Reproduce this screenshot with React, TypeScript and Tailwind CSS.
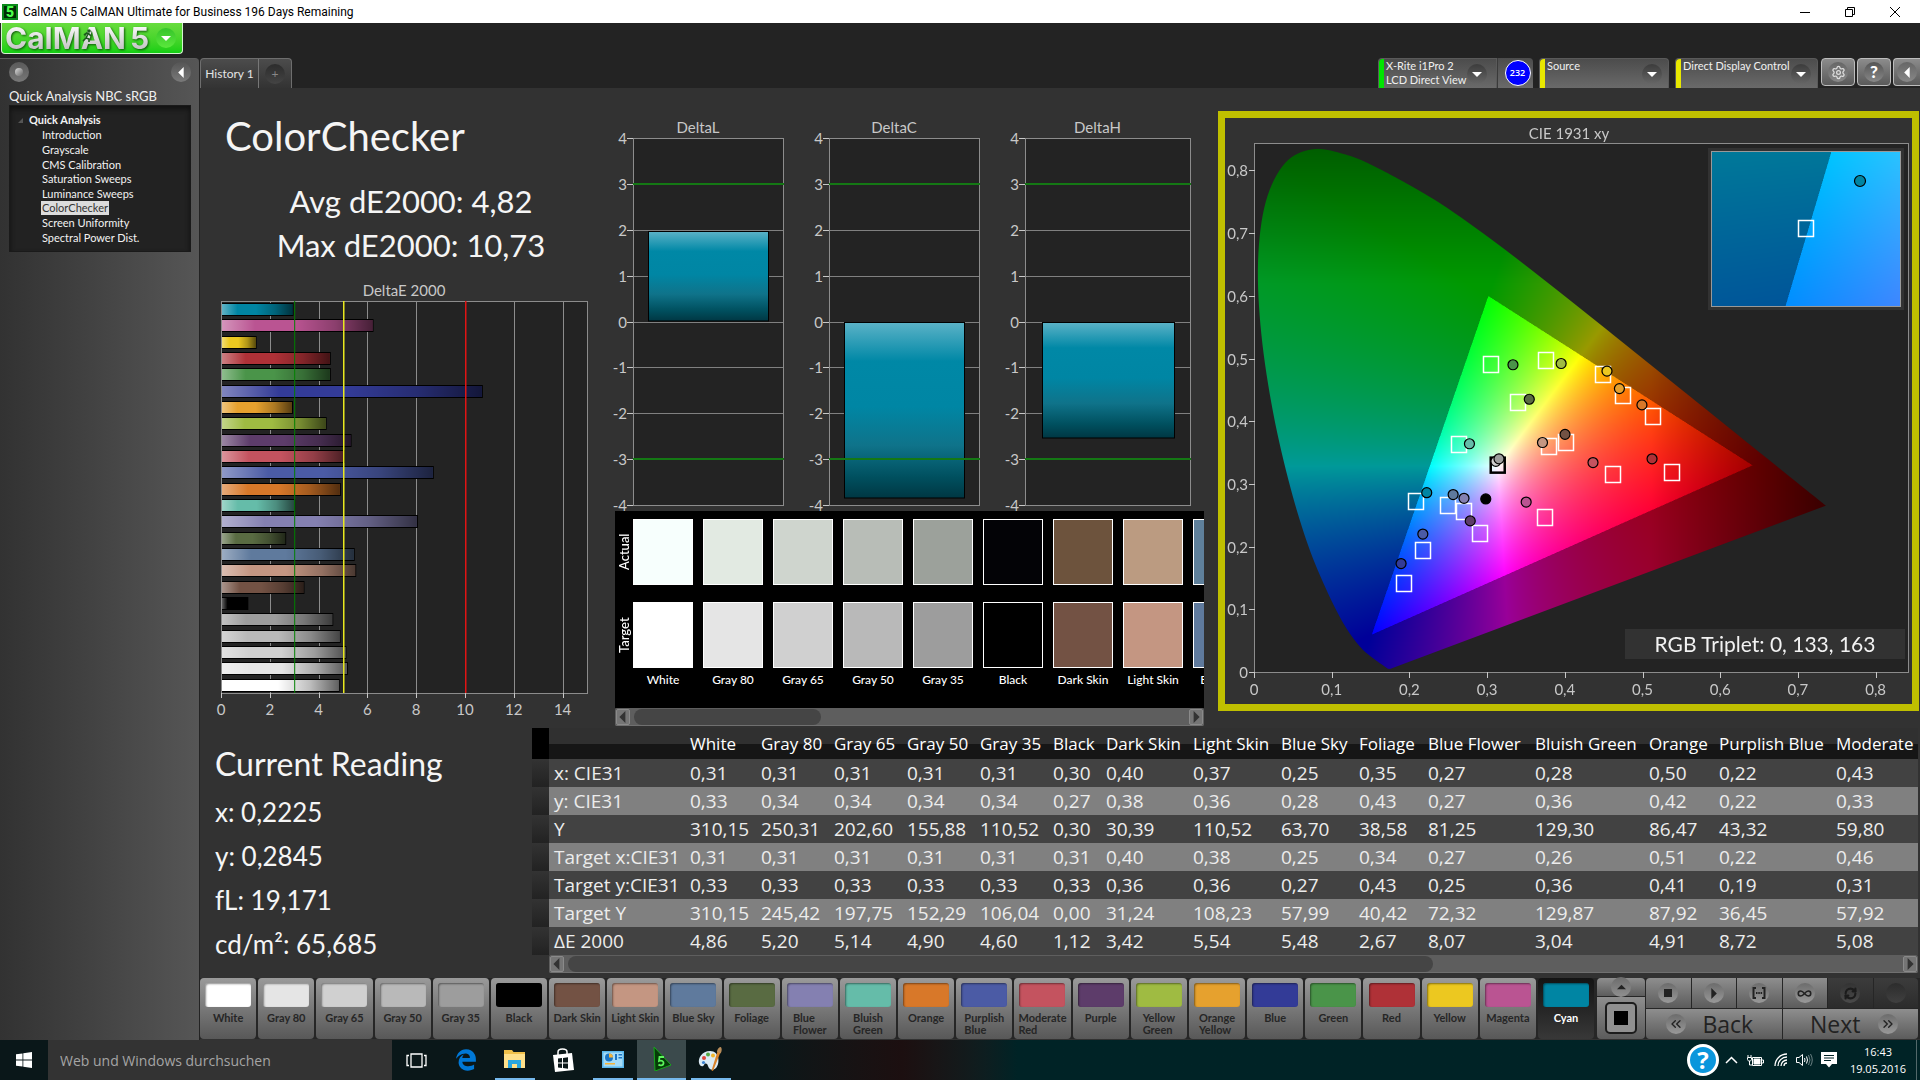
import { useEffect, useRef } from "react";
import type { ReactNode } from "react";
import { clsx } from "clsx";
import { FaEdgeLegacy } from "react-icons/fa";
import { ChevronsLeft, ChevronsRight, Infinity as InfinityIcon, RefreshCw, Settings } from "lucide-react";

type Patch = { name: string; color: string; actual: string; dE: number };

const PATCHES: Patch[] = [
  { name: "White", color: "#ffffff", actual: "#f7fffd", dE: 4.86 },
  { name: "Gray 80", color: "#e5e5e5", actual: "#e2eae2", dE: 5.2 },
  { name: "Gray 65", color: "#d0d0d0", actual: "#cfd5ce", dE: 5.14 },
  { name: "Gray 50", color: "#b9b9b9", actual: "#b8bdb7", dE: 4.9 },
  { name: "Gray 35", color: "#9d9d9d", actual: "#9ca19b", dE: 4.6 },
  { name: "Black", color: "#000000", actual: "#030306", dE: 1.12 },
  { name: "Dark Skin", color: "#735244", actual: "#6d533d", dE: 3.42 },
  { name: "Light Skin", color: "#c49682", actual: "#bb9b81", dE: 5.54 },
  { name: "Blue Sky", color: "#5f7a9d", actual: "#5f809b", dE: 5.48 },
  { name: "Foliage", color: "#596b42", actual: "#596b42", dE: 2.67 },
  { name: "Blue Flower", color: "#8480b1", actual: "#8480b1", dE: 8.07 },
  { name: "Bluish Green", color: "#65bca9", actual: "#65bca9", dE: 3.04 },
  { name: "Orange", color: "#d87829", actual: "#d87829", dE: 4.91 },
  { name: "Purplish Blue", color: "#4b5ba5", actual: "#4b5ba5", dE: 8.72 },
  { name: "Moderate Red", color: "#c4535f", actual: "#c4535f", dE: 5.08 },
  { name: "Purple", color: "#5d3c6a", actual: "#5d3c6a", dE: 5.35 },
  { name: "Yellow Green", color: "#9fbb42", actual: "#9fbb42", dE: 4.33 },
  { name: "Orange Yellow", color: "#e6a12e", actual: "#e6a12e", dE: 2.95 },
  { name: "Blue", color: "#333b97", actual: "#333b97", dE: 10.73 },
  { name: "Green", color: "#4a9449", actual: "#4a9449", dE: 4.5 },
  { name: "Red", color: "#af3137", actual: "#af3137", dE: 4.5 },
  { name: "Yellow", color: "#ecc820", actual: "#ecc820", dE: 1.46 },
  { name: "Magenta", color: "#ba5492", actual: "#ba5492", dE: 6.25 },
  { name: "Cyan", color: "#0085a3", actual: "#0085a3", dE: 2.97 },
];

const TREE = [
  "Introduction",
  "Grayscale",
  "CMS Calibration",
  "Saturation Sweeps",
  "Luminance Sweeps",
  "ColorChecker",
  "Screen Uniformity",
  "Spectral Power Dist.",
];

const COLUMNS = [
  { name: "White", width: 71 },
  { name: "Gray 80", width: 73 },
  { name: "Gray 65", width: 73 },
  { name: "Gray 50", width: 73 },
  { name: "Gray 35", width: 73 },
  { name: "Black", width: 53 },
  { name: "Dark Skin", width: 87 },
  { name: "Light Skin", width: 88 },
  { name: "Blue Sky", width: 78 },
  { name: "Foliage", width: 69 },
  { name: "Blue Flower", width: 107 },
  { name: "Bluish Green", width: 114 },
  { name: "Orange", width: 70 },
  { name: "Purplish Blue", width: 117 },
  { name: "Moderate", width: undefined },
];

const ROWS: [string, string[]][] = [
  ["x: CIE31", ["0,31", "0,31", "0,31", "0,31", "0,31", "0,30", "0,40", "0,37", "0,25", "0,35", "0,27", "0,28", "0,50", "0,22", "0,43"]],
  ["y: CIE31", ["0,33", "0,34", "0,34", "0,34", "0,34", "0,27", "0,38", "0,36", "0,28", "0,43", "0,27", "0,36", "0,42", "0,22", "0,33"]],
  ["Y", ["310,15", "250,31", "202,60", "155,88", "110,52", "0,30", "30,39", "110,52", "63,70", "38,58", "81,25", "129,30", "86,47", "43,32", "59,80"]],
  ["Target x:CIE31", ["0,31", "0,31", "0,31", "0,31", "0,31", "0,31", "0,40", "0,38", "0,25", "0,34", "0,27", "0,26", "0,51", "0,22", "0,46"]],
  ["Target y:CIE31", ["0,33", "0,33", "0,33", "0,33", "0,33", "0,33", "0,36", "0,36", "0,27", "0,43", "0,25", "0,36", "0,41", "0,19", "0,31"]],
  ["Target Y", ["310,15", "245,42", "197,75", "152,29", "106,04", "0,00", "31,24", "108,23", "57,99", "40,42", "72,32", "129,87", "87,92", "36,45", "57,92"]],
  ["ΔE 2000", ["4,86", "5,20", "5,14", "4,90", "4,60", "1,12", "3,42", "5,54", "5,48", "2,67", "8,07", "3,04", "4,91", "8,72", "5,08"]],
];

const range = (from: number, to: number) => Array.from({ length: to - from + 1 }, (_, i) => from + i);

/* ---------- charts ---------- */

function DeltaEChart() {
  const left = 21;
  const top = 30;
  const width = 366;
  const height = 392;
  const unit = width / 15;
  const step = height / PATCHES.length;
  const bars = [...PATCHES].reverse();

  return (
    <svg viewBox="0 0 390 450" className="mt-1 block w-full" fontSize="15" fill="#c8c8c8">
      <defs>
        <linearGradient id="glossX">
          <stop offset="0" stopColor="#fff" stopOpacity="0.38" />
          <stop offset="0.22" stopColor="#fff" stopOpacity="0" />
          <stop offset="0.48" stopColor="#000" stopOpacity="0" />
          <stop offset="0.75" stopColor="#000" stopOpacity="0.25" />
          <stop offset="1" stopColor="#000" stopOpacity="0.62" />
        </linearGradient>
      </defs>
      <text x="204" y="25" textAnchor="middle">DeltaE 2000</text>
      <rect x={left} y={top} width={width} height={height} fill="#232323" />
      {[2, 4, 6, 8, 12, 14].map((v) => (
        <rect key={v} x={Math.round(left + v * unit)} y={top} width="1" height={height} fill="#8c8c8c" />
      ))}
      {bars.map((p, i) => {
        const y = Math.round(top + i * step + 2);
        return (
          <g key={p.name}>
            <rect x={left} y={y} width={p.dE * unit} height="13" fill="#000" />
            <rect x={left + 1} y={y + 1} width={p.dE * unit - 2} height="11" fill={p.color} />
            <rect x={left + 1} y={y + 1} width={p.dE * unit - 2} height="11" fill="url(#glossX)" />
          </g>
        );
      })}
      <rect x={left + 0.5} y={top + 0.5} width={width} height={height} fill="none" stroke="#8c8c8c" />
      <rect x={left + 3 * unit} y={top} width="1" height={height} fill="#008000" />
      <rect x={left + 5 * unit} y={top} width="1.5" height={height} fill="#e8e81e" />
      <rect x={left + 10 * unit} y={top} width="1.5" height={height} fill="#e01414" />
      {range(0, 7).map((i) => (
        <g key={i}>
          <rect x={Math.round(left + i * 2 * unit)} y={top + height} width="1" height="5" fill="#c8c8c8" />
          <text x={left + i * 2 * unit} y="444" textAnchor="middle">{i * 2}</text>
        </g>
      ))}
    </svg>
  );
}

function DeltaChart({ title, value, width }: { title: string; value: number; width: number }) {
  const left = 39;
  const top = 28;
  const unit = 367 / 8;
  const plot = width - left - 7;
  const zero = top + 4 * unit;
  const inset = plot * 0.1;
  const barTop = value > 0 ? zero - value * unit : zero;
  const barHeight = Math.abs(value) * unit;

  return (
    <svg width={width} height="401" viewBox={`0 0 ${width} 401`} className="block shrink-0 overflow-visible" fontSize="15" fill="#c8c8c8">
      <defs>
        <linearGradient id="cyanBar" x2="0" y2="1">
          <stop offset="0" stopColor="#5bb2c7" />
          <stop offset="0.22" stopColor="#0088a6" />
          <stop offset="0.48" stopColor="#0086a4" />
          <stop offset="0.7" stopColor="#0f738a" />
          <stop offset="0.88" stopColor="#00505f" />
          <stop offset="1" stopColor="#003743" />
        </linearGradient>
      </defs>
      <text x={left + plot / 2 - 10} y="23" textAnchor="middle">{title}</text>
      <rect x={left + 0.5} y={top} width={plot} height={8 * unit} fill="#232323" />
      {range(-4, 4).map((v) => (
        <g key={v}>
          <rect x={left - 6} y={Math.round(zero - v * unit)} width="6" height="1" fill="#c8c8c8" />
          <rect x={left} y={Math.round(zero - v * unit)} width={plot} height="1" fill="#808080" />
          <text x={left - 6} y={Math.round(zero - v * unit) + 6} textAnchor="end">{v}</text>
        </g>
      ))}
      <rect x={left + 0.5} y={top + 0.5} width={plot} height={8 * unit} fill="none" stroke="#8c8c8c" />
      <rect x={Math.round(left + inset) + 0.5} y={Math.round(barTop) + 0.5} width={Math.round(plot - 2 * inset)} height={Math.round(barHeight) - 0.5} fill="url(#cyanBar)" stroke="#000" />
      {[3, -3].map((v) => (
        <rect key={v} x={left} y={Math.round(zero - v * unit) - 1} width={plot + 1} height="2" fill="#147814" />
      ))}
    </svg>
  );
}

/* ---------- chromaticity diagram ---------- */

const LOCUS: [number, number][] = [
  [0.1741, 0.005], [0.1714, 0.0051], [0.1689, 0.0069], [0.1644, 0.0109], [0.1566, 0.0177], [0.144, 0.0297],
  [0.1355, 0.0399], [0.1241, 0.0578], [0.1096, 0.0868], [0.0913, 0.1327], [0.0687, 0.2007], [0.0454, 0.295],
  [0.0235, 0.4127], [0.0082, 0.5384], [0.0039, 0.6548], [0.0139, 0.7502], [0.0389, 0.812], [0.0743, 0.8338],
  [0.1142, 0.8262], [0.1547, 0.8059], [0.2296, 0.7543], [0.3016, 0.6923], [0.3731, 0.6245], [0.4441, 0.5547],
  [0.5125, 0.4866], [0.5752, 0.4242], [0.627, 0.3725], [0.6658, 0.334], [0.6915, 0.3083], [0.719, 0.2809],
  [0.7347, 0.2653],
];

const TARGETS: [number, number][] = [
  [0.304, 0.492], [0.375, 0.497], [0.448, 0.475], [0.339, 0.43], [0.474, 0.442], [0.512, 0.409], [0.263, 0.364],
  [0.378, 0.36], [0.4, 0.367], [0.461, 0.315], [0.537, 0.319], [0.207, 0.272], [0.249, 0.267], [0.269, 0.256],
  [0.29, 0.222], [0.373, 0.248], [0.216, 0.194], [0.192, 0.142],
];

const READINGS: [number, number, string][] = [
  [0.332, 0.49, "#4a9449"], [0.394, 0.492, "#9fbb42"], [0.453, 0.48, "#ecc820"], [0.353, 0.435, "#596b42"],
  [0.469, 0.452, "#e6a12e"], [0.498, 0.426, "#d87829"], [0.276, 0.364, "#65bca9"], [0.37, 0.366, "#c49682"],
  [0.399, 0.379, "#735244"], [0.435, 0.334, "#c4535f"], [0.511, 0.34, "#af3137"], [0.31, 0.336, "#d0d0d0"],
  [0.314, 0.34, "#9d9d9d"], [0.221, 0.286, "#0085a3"], [0.255, 0.283, "#5f7a9d"], [0.269, 0.277, "#8480b1"],
  [0.297, 0.276, "#000000"], [0.349, 0.271, "#ba5492"], [0.277, 0.241, "#5d3c6a"], [0.216, 0.22, "#4b5ba5"],
  [0.188, 0.173, "#333b97"],
];

const CIE = { width: 687, height: 586, x0: 30, y0: 554, sx: 777, sy: 627 };
const ZOOM = { x: 486, y: 33, width: 190, height: 156 };
const cx = (x: number) => CIE.x0 + x * CIE.sx;
const cy = (y: number) => CIE.y0 - y * CIE.sy;
const clamp = (v: number, lo: number, hi: number) => Math.min(hi, Math.max(lo, v));

// colour of a chromaticity in linear sRGB at full brightness, dimmed outside of the sRGB triangle
function shade(x: number, y: number) {
  const X = x / Math.max(y, 0.001);
  const Z = (1 - x - y) / Math.max(y, 0.001);
  const rgb = [
    3.2406 * X - 1.5372 - 0.4986 * Z,
    -0.9689 * X + 1.8758 + 0.0415 * Z,
    0.0557 * X - 0.204 + 1.057 * Z,
  ];
  const inside = Math.min(...rgb) >= 0;
  const max = Math.max(...rgb);
  const fall = clamp(1 - (x - 0.51) * 2.8, 0.4, 1) * clamp(1 - (y - 0.62) * 1.8, 0.6, 1);
  const gain = 255 * fall * (inside ? 1 : 0.6);
  return rgb.map((c) => gain * clamp(c / max, 0, 1) ** 0.95);
}

function paint(width: number, height: number, toXy: (px: number, py: number) => [number, number]) {
  const buffer = document.createElement("canvas");
  buffer.width = width;
  buffer.height = height;
  const ctx = buffer.getContext("2d")!;
  const image = ctx.createImageData(width, height);
  for (let j = 0; j < height; j++) {
    for (let i = 0; i < width; i++) {
      const [x, y] = toXy(i, j);
      const [r, g, b] = shade(x, y);
      const k = (j * width + i) * 4;
      image.data[k] = r;
      image.data[k + 1] = g;
      image.data[k + 2] = b;
      image.data[k + 3] = 255;
    }
  }
  ctx.putImageData(image, 0, 0);
  return buffer;
}

function CieChart() {
  const ref = useRef<HTMLCanvasElement>(null);

  useEffect(() => {
    const ctx = ref.current?.getContext("2d");
    if (!ctx) return;
    const s = 2;
    ctx.setTransform(1, 0, 0, 1, 0, 0);
    ctx.fillStyle = "#232323";
    ctx.fillRect(30 * s, 25 * s, 654 * s, 529 * s);

    // horseshoe as a Catmull-Rom curve through the locus samples
    const pts = LOCUS.map(([x, y]) => [cx(x) * s, cy(y) * s]);
    ctx.save();
    ctx.beginPath();
    ctx.moveTo(pts[0][0], pts[0][1]);
    for (let i = 0; i < pts.length - 1; i++) {
      const a = pts[Math.max(i - 1, 0)];
      const b = pts[i];
      const c = pts[i + 1];
      const d = pts[Math.min(i + 2, pts.length - 1)];
      ctx.bezierCurveTo(
        b[0] + (c[0] - a[0]) / 6,
        b[1] + (c[1] - a[1]) / 6,
        c[0] - (d[0] - b[0]) / 6,
        c[1] - (d[1] - b[1]) / 6,
        c[0],
        c[1],
      );
    }
    ctx.closePath();
    ctx.clip();
    ctx.drawImage(
      paint(CIE.width * s, CIE.height * s, (i, j) => [(i / s - CIE.x0) / CIE.sx, (CIE.y0 - j / s) / CIE.sy]),
      0,
      0,
    );
    ctx.restore();

    // magnified area around the selected patch
    ctx.fillStyle = "#323232";
    ctx.fillRect((ZOOM.x - 3) * s, (ZOOM.y - 3) * s, (ZOOM.width + 6) * s, (ZOOM.height + 6) * s);
    ctx.drawImage(
      paint(ZOOM.width * s, ZOOM.height * s, (i, j) => [0.2075 + (i / s - 94) / 3690, 0.27 - (j / s - 78) / 3450]),
      ZOOM.x * s,
      ZOOM.y * s,
    );
  }, []);

  return (
    <section className="min-w-0 flex-1 self-start border-[7px] border-[#bfbf00] bg-[#323232]">
      <div className="relative aspect-[687/586]">
        <canvas ref={ref} width={CIE.width * 2} height={CIE.height * 2} className="absolute inset-0 h-full w-full" />
        <svg viewBox={`0 0 ${CIE.width} ${CIE.height}`} className="absolute inset-0 h-full w-full" fontSize="15" fill="#c8c8c8">
          <text x="344" y="21" textAnchor="middle">CIE 1931 xy</text>
          <rect x="29.5" y="25.5" width="654" height="529" fill="none" stroke="#8c8c8c" />
          {range(0, 8).map((i) => (
            <g key={i}>
              <rect x={Math.round(cx(i / 10)) - 1} y="554" width="1" height="6" fill="#c8c8c8" />
              <rect x="24" y={Math.round(cy(i / 10))} width="6" height="1" fill="#c8c8c8" />
              <text x={cx(i / 10) - 1} y="577" textAnchor="middle">{i === 0 ? "0" : `0,${i}`}</text>
              <text x="23" y={cy(i / 10) + 6} textAnchor="end">{i === 0 ? "0" : `0,${i}`}</text>
            </g>
          ))}
          {TARGETS.map(([x, y]) => (
            <rect key={`${x}-${y}`} x={Math.round(cx(x)) - 7.5} y={Math.round(cy(y)) - 7.5} width="15" height="16" fill="none" stroke="#fff" strokeWidth="1.5" />
          ))}
          <rect x={cx(0.3124) - 7} y={cy(0.3307) - 7} width="14" height="15" fill="none" stroke="#000" strokeWidth="2.5" />
          {READINGS.map(([x, y, fill]) => (
            <circle key={`${x}-${y}`} cx={cx(x)} cy={cy(y)} r="5" fill={fill} stroke="#000" strokeWidth="1.2" />
          ))}
          <rect x={ZOOM.x + 0.5} y={ZOOM.y + 0.5} width={ZOOM.width - 1} height={ZOOM.height - 1} fill="none" stroke="#999" />
          <rect x="573.5" y="102.500" width="15" height="16" fill="none" stroke="#fff" strokeWidth="1.5" />
          <circle cx="635" cy="63" r="5.5" fill="#0085a3" stroke="#000" strokeWidth="1.2" />
          <rect x="400" y="511" width="280" height="30" fill="#323232" />
          <text x="540" y="534" textAnchor="middle" fontSize="21" fill="#f2f2f2">RGB Triplet: 0, 133, 163</text>
        </svg>
      </div>
    </section>
  );
}

/* ---------- small parts ---------- */

function Arrow({ dir, size = 8 }: { dir: "left" | "right" | "down" | "up"; size?: number }) {
  const d = {
    left: "M7 0v10L2 5z",
    right: "M3 0v10l5-5z",
    down: "M0 3h10L5 8z",
    up: "M0 7h10L5 2z",
  }[dir];
  return (
    <svg viewBox="0 0 10 10" width={size} height={size} fill="currentColor" aria-hidden="true">
      <path d={d} />
    </svg>
  );
}

function Knob({ children, className }: { children?: ReactNode; className?: string }) {
  return (
    <span className={clsx("flex size-5 shrink-0 items-center justify-center rounded-full bg-linear-to-b", className)}>
      {children}
    </span>
  );
}

function ScrollBar({ thumb, label }: { thumb: string; label: string }) {
  return (
    <div role="scrollbar" aria-label={label} aria-orientation="horizontal" aria-controls="content" aria-valuenow={0} className="flex h-[18px] items-center gap-1 rounded-xs border-b border-[#707070] bg-[#5e5e5e] px-px">
      <button aria-label="Scroll left" className="flex h-4 w-[14px] items-center justify-center rounded-xs border border-[#8a8a8a] bg-[#757575] text-[#333]">
        <Arrow dir="left" size={12} />
      </button>
      <div className="h-4 flex-1">
        <div className={clsx("h-4 rounded-lg bg-[#454545]", thumb)} />
      </div>
      <button aria-label="Scroll right" className="flex h-4 w-[14px] items-center justify-center rounded-xs border border-[#8a8a8a] bg-[#757575] text-[#333]">
        <Arrow dir="right" size={12} />
      </button>
    </div>
  );
}

/* ---------- window chrome ---------- */

function TitleBar() {
  return (
    <header className="flex h-[23px] shrink-0 items-center bg-white pr-0.5 font-[Roboto,sans-serif] text-[12px] text-black">
      <span className="ml-0.5 flex size-4 items-center justify-center border-2 border-[#0a8a1a] bg-[#022c06] text-[14px] leading-none font-black text-[#4dff4d]">5</span>
      <h1 className="ml-[5px]">CalMAN 5 CalMAN Ultimate for Business 196 Days Remaining</h1>
      <div className="ml-auto flex">
        <button aria-label="Minimize" className="flex h-[22px] w-[45px] items-center justify-center">
          <svg width="10" height="10" stroke="#000"><path d="M0 5.5h10" /></svg>
        </button>
        <button aria-label="Restore" className="flex h-[22px] w-[45px] items-center justify-center">
          <svg width="10" height="10" stroke="#000" fill="none"><path d="M.5 2.5h7v7h-7zM2.5 2.5v-2h7v7h-2" /></svg>
        </button>
        <button aria-label="Close" className="flex h-[22px] w-[46px] items-center justify-center">
          <svg width="10" height="10" stroke="#000"><path d="M0 0l10 10M10 0L0 10" /></svg>
        </button>
      </div>
    </header>
  );
}

function Sidebar() {
  return (
    <div className="flex w-[199px] shrink-0 flex-col">
      <div className="h-[35px]">
        <button className="ml-px flex h-[31px] w-[182px] items-center rounded-b-[4px] border border-t-0 border-[#d5f5d0] bg-linear-to-b from-[#68dc3e] to-[#0fcf12] pl-[3px] font-[Inter,sans-serif]">
          <span className="relative flex gap-1 bg-linear-to-b from-white to-[#bdbdbd] bg-clip-text text-[30px] leading-[28px] font-bold text-transparent drop-shadow-[1px_1px_1px_rgba(0,60,0,0.8)]">
            <span>CalMAN</span>
            <span>5</span>
            <svg className="absolute top-[5px] left-[77px]" width="12" height="14" viewBox="0 0 12 14" fill="none" stroke="#1b5a1b" strokeWidth="1.6">
              <circle cx="7" cy="2" r="1" />
              <path d="M2 6l3-2 2 1 2 2M6 5l-2 4 3 1v3M4 9l-3 3" />
            </svg>
          </span>
          <Knob className="mr-1.5 ml-auto from-[#35c42a] to-[#5ae83c] text-white"><Arrow dir="down" size={10} /></Knob>
        </button>
      </div>
      <aside className="flex-1 rounded-tr-[4px] border-t border-[#5c5c5c] bg-linear-to-r from-[#323232] to-[#565656] pr-2 pl-[9px]">
        <div className="mt-[3px] flex justify-between">
          <Knob className="from-[#5a5a5a] to-[#787878]"><span className="size-2 rounded-full bg-linear-to-br from-[#ddd] to-[#666]" /></Knob>
          <button aria-label="Collapse panel" className="text-white"><Knob className="from-[#555] to-[#7a7a7a]"><Arrow dir="left" size={11} /></Knob></button>
        </div>
        <h2 className="mt-1.5 text-[13px] leading-[16px] text-[#f0f0f0]">Quick Analysis NBC sRGB</h2>
        <nav className="mt-px h-[147px] border border-[#1a1a1a] bg-[#222] pt-[7px] text-[11px] text-[#f2f2f2] shadow-[inset_0_3px_5px_#111]">
          <div className="flex h-[15px] items-center font-bold">
            <svg className="mr-1.5 ml-2" width="5" height="5" fill="#555"><path d="M5 0v5H0z" /></svg>
            Quick Analysis
          </div>
          <ul className="grid h-[117px] grid-rows-8 pl-[31px]">
            {TREE.map((item) => (
              <li key={item} className="flex items-center">
                <button className={clsx("px-px leading-[14px]", item === "ColorChecker" && "bg-[#dcdcdc] text-[#333]")}>{item}</button>
              </li>
            ))}
          </ul>
        </nav>
      </aside>
    </div>
  );
}

function Device({ color, lines, className }: { color: string; lines: string[]; className: string }) {
  return (
    <button className={clsx("flex h-[30px] rounded-t-[4px] border border-b-0 border-[#5a5a5a] bg-linear-to-b from-[#4c4c4c] to-[#6a6a6a] text-left text-[11px] leading-[14px] text-[#f0f0f0]", className)}>
      <span className={clsx("mr-0.5 h-full w-[5px] shrink-0 rounded-tl-[4px]", color)} />
      <span className="flex-1 whitespace-nowrap">
        {lines.map((l) => (
          <span key={l} className="block">{l}</span>
        ))}
      </span>
      <Knob className="mt-[5px] mr-1.5 from-[#3c3c3c] to-[#666] text-white"><Arrow dir="down" size={10} /></Knob>
    </button>
  );
}

const toolButton = "flex h-7 items-center justify-center rounded-[4px] border border-[#bdbdbd] bg-linear-to-b from-[#8c8c8c] to-[#5a5a5a] text-white";

function TabStrip() {
  return (
    <div className="flex h-[65px] items-end">
      <div role="tablist" className="flex h-[30px] rounded-t-[4px] border border-b-0 border-[#6e6e6e] bg-linear-to-b from-[#4c4c4c] to-[#333] text-[12px] text-[#e4e4e4]">
        <button role="tab" aria-selected="true" className="w-[58px] border-r border-[#777] text-center">History 1</button>
        <button aria-label="Add history" className="flex w-8 items-center justify-center text-[#888]"><Knob className="from-[#2c2c2c] to-[#444]">+</Knob></button>
      </div>
      <div className="ml-auto flex h-[30px]">
        <Device color="bg-[#00e400]" lines={["X-Rite i1Pro 2", "LCD Direct View"]} className="w-[119px] rounded-tr-none pr-[3px]" />
        <div className="flex w-9 items-center justify-center rounded-tr-[4px] border-l border-[#3a3a3a] bg-linear-to-b from-[#4c4c4c] to-[#6a6a6a] pl-1">
          <span className="flex size-[26px] items-center justify-center rounded-full border border-white bg-[#0000ff] font-['Open_Sans',sans-serif] text-[9px] font-semibold text-white">232</span>
        </div>
        <Device color="bg-[#e8e800]" lines={["Source"]} className="ml-1.5 w-[130px]" />
        <Device color="bg-[#e8e800]" lines={["Direct Display Control"]} className="ml-1.5 w-[143px]" />
        <button aria-label="Settings" className={clsx(toolButton, "ml-[3px] w-[34px]")}>
          <Knob className="from-[#666] to-[#888]"><Settings size={15} color="#ddd" /></Knob>
        </button>
        <button aria-label="Help" className={clsx(toolButton, "ml-0.5 w-[34px] text-[17px] font-black")}>
          <Knob className="from-[#555] to-[#888]">?</Knob>
        </button>
        <button aria-label="Collapse" className={clsx(toolButton, "ml-0.5 w-[27px] rounded-r-none border-r-0")}>
          <Knob className="from-[#666] to-[#888]"><Arrow dir="left" size={11} /></Knob>
        </button>
      </div>
    </div>
  );
}

/* ---------- content ---------- */

function SwatchStrip() {
  const shown = PATCHES.slice(0, 9);
  return (
    <div className="relative mr-[14px] ml-[25px]">
      <div className="flex h-[197px] overflow-hidden bg-black pt-2 text-[12px] font-medium text-white">
        <div className="flex w-[18px] shrink-0 flex-col gap-[17px] text-center text-[13px] leading-[18px]">
          <span className="h-[66px] rotate-180 [writing-mode:vertical-rl]">Actual</span>
          <span className="h-[66px] rotate-180 [writing-mode:vertical-rl]">Target</span>
        </div>
        <div className="flex min-w-0 flex-1 gap-[10px] overflow-hidden">
          {shown.map((p) => (
            <div key={p.name} className="w-[60px] shrink-0 text-center whitespace-nowrap">
              <div className="h-[66px] border border-white" style={{ background: p.actual }} />
              <div className="mt-[17px] h-[66px] border border-white" style={{ background: p.color }} />
              <div className="mt-[5px] leading-[14px]">{p.name}</div>
            </div>
          ))}
        </div>
      </div>
      <ScrollBar label="Patches" thumb="w-[34%]" />
    </div>
  );
}

function Reading() {
  return (
    <section className="w-[332px] shrink-0 pt-[14px] pl-[15px] text-[26px] leading-[44px] text-[#f5f5f5]">
      <h3 className="mb-1 text-[32px]">Current Reading</h3>
      <p>x: 0,2225</p>
      <p>y: 0,2845</p>
      <p>fL: 19,171</p>
      <p>cd/m²: 65,685</p>
    </section>
  );
}

function DataTable() {
  return (
    <div className="min-w-0 flex-1 overflow-hidden font-['Open_Sans',sans-serif]">
      <table id="content" className="w-full table-fixed border-collapse text-left text-[19px] whitespace-nowrap text-[#ececec]">
        <colgroup>
          <col className="w-[17px]" />
          <col className="w-[136px]" />
          {COLUMNS.map((c) => (
            <col key={c.name} style={{ width: c.width }} />
          ))}
        </colgroup>
        <thead>
          <tr className="h-[31px] bg-linear-to-b from-[#303030] from-50% to-[#161616] to-50% text-[17px] text-white">
            <td className="bg-black" />
            <td />
            {COLUMNS.map((c) => (
              <th key={c.name} scope="col" className="pl-[5px] font-normal">{c.name}</th>
            ))}
          </tr>
        </thead>
        <tbody>
          {ROWS.map(([label, values], i) => (
            <tr key={label} className={clsx("h-7 leading-[28px]", i % 2 ? "bg-[#808080]" : "bg-[#424242]")}>
              <td className="bg-linear-to-b from-[#333] to-[#222]" />
              <th scope="row" className="pl-[5px] font-normal">{label}</th>
              {values.map((v, j) => (
                <td key={COLUMNS[j].name} className="pl-[5px]">{v}</td>
              ))}
            </tr>
          ))}
        </tbody>
      </table>
      <div className="pl-[17px]">
        <ScrollBar label="Readings" thumb="w-[65%]" />
      </div>
    </div>
  );
}

const key = "flex items-center justify-center bg-linear-to-b from-[#8e8e8e] to-[#5c5c5c] text-[#222]";
const keyKnob = "from-[#6c6c6c] to-[#999]";
const darkKey = "flex items-center justify-center bg-linear-to-b from-[#3c3c3c] to-[#2c2c2c] text-[#1c1c1c]";

function PatchBar() {
  return (
    <div className="mt-[5px] flex h-[61px] bg-[#262626]">
      <div className="flex min-w-0 flex-1 gap-0.5 pr-[3px]">
        {PATCHES.map((p) => {
          const active = p.name === "Cyan";
          return (
            <button
              key={p.name}
              className={clsx(
                "flex min-w-0 flex-1 flex-col items-center rounded-[4px] bg-linear-to-b pt-[5px] text-[11px] leading-[12px] font-bold",
                active ? "from-[#141414] to-[#383838] text-white" : "from-[#9a9a9a] to-[#585858] text-[#262626]",
              )}
            >
              <span className="h-6 w-[46px] rounded-[3px] shadow-[inset_1px_1px_2px_rgba(0,0,0,0.45)]" style={{ background: p.color }} />
              <span className="mt-[5px] text-left">
                {["Dark Skin", "Light Skin", "Blue Sky"].includes(p.name) || p.name.startsWith("Gray") ? (
                  <span className="whitespace-nowrap">{p.name}</span>
                ) : (
                  p.name.split(" ").map((w) => <span key={w} className="block">{w}</span>)
                )}
              </span>
            </button>
          );
        })}
      </div>
      <div className="flex w-12 flex-col gap-px">
        <button aria-label="Expand" className={clsx(key, "h-[18px] rounded-t-[4px]")}>
          <Knob className="from-[#6c6c6c] to-[#909090]"><Arrow dir="up" size={9} /></Knob>
        </button>
        <button aria-label="Pattern window" className={clsx(key, "flex-1 rounded-b-[4px]")}>
          <span className="flex size-8 items-center justify-center rounded-[5px] border-2 border-[#1c1c1c] bg-[#909090]"><span className="size-[14px] bg-black" /></span>
        </button>
      </div>
      <div className="mr-0.5 ml-px flex w-[272px] flex-col gap-px">
        <div className="grid h-[30px] grid-cols-6 gap-px">
          <button aria-label="Stop" className={clsx(key, "rounded-tl-[4px]")}><Knob className={keyKnob}><span className="size-2 bg-[#222]" /></Knob></button>
          <button aria-label="Play" className={key}><Knob className={keyKnob}><Arrow dir="right" size={11} /></Knob></button>
          <button aria-label="Read series" className={key}>
            <Knob className={keyKnob}>
              <svg width="14" height="12" fill="none" stroke="#222" strokeWidth="2"><path d="M4 1H1.5v10H4M10 1h2.500v10H10M4 6h1.500M6.300 6h1.500M8.600 6h1.500" /></svg>
            </Knob>
          </button>
          <button aria-label="Continuous" className={key}><Knob className={keyKnob}><InfinityIcon size={15} strokeWidth={2.5} /></Knob></button>
          <button aria-label="Refresh" className={darkKey}><Knob className="from-[#333] to-[#4a4a4a]"><RefreshCw size={13} strokeWidth={4} /></Knob></button>
          <button aria-label="Record" className={clsx(darkKey, "rounded-tr-[4px]")}><Knob className="from-[#2c2c2c] to-[#404040]" /></button>
        </div>
        <div className="grid flex-1 grid-cols-2 gap-px font-['Open_Sans',sans-serif] text-[23px] leading-[30px] font-medium">
          <button className={clsx(key, "gap-4 rounded-bl-[4px] pr-2")}><Knob className={keyKnob}><ChevronsLeft size={16} /></Knob>Back</button>
          <button className={clsx(key, "gap-[18px] rounded-br-[4px] pl-2")}>Next<Knob className={keyKnob}><ChevronsRight size={16} /></Knob></button>
        </div>
      </div>
    </div>
  );
}

/* ---------- taskbar ---------- */

function Task({ label, children, open, active }: { label: string; children: ReactNode; open?: boolean; active?: boolean }) {
  return (
    <button aria-label={label} className={clsx("flex h-10 w-[49px] flex-col items-center", active && "bg-[#3b4a4c]")}>
      <span className="flex flex-1 items-center">{children}</span>
      {open && <span className={clsx("h-0.5 bg-[#76b9ed]", active ? "w-full" : "w-10")} />}
    </button>
  );
}

function Taskbar() {
  return (
    <footer className="flex h-10 shrink-0 bg-[#002326] bg-linear-to-r from-[#0a1719] from-40% via-[#1c0f10] via-47% to-[#002326] to-53% font-['Open_Sans',sans-serif] text-white">
      <button aria-label="Start" className="flex w-12 items-center justify-center">
        <svg width="16" height="16" viewBox="0 0 16 16" fill="#fff"><path d="M0 2.300L6.500 1.400v6.200H0zM7.300 1.300L16 0v7.600H7.300zM0 8.400h6.500v6.200L0 13.700zM7.300 8.400H16V16l-8.700-1.300z" /></svg>
      </button>
      <input aria-label="Search" placeholder="Web und Windows durchsuchen" className="w-[344px] bg-[#333] pl-3 text-[14px] placeholder:text-[#a5a5a5]" />
      <Task label="Task view">
        <svg width="21" height="15" viewBox="0 0 21 15" fill="none" stroke="#fff" strokeWidth="1.3"><path d="M5 1h11v13H5zM3 2.500H1v10h2M18 2.500h2v10h-2" /></svg>
      </Task>
      <Task label="Edge"><FaEdgeLegacy size={22} color="#0078d7" /></Task>
      <Task label="Explorer" open>
        <svg width="23" height="20" viewBox="0 0 23 20">
          <path d="M1 1h8l1.500 2H22v16H1z" fill="#f0c04a" />
          <path d="M1 5h21v14H1z" fill="#ffe08a" />
          <path d="M5 19v-8h13v8h-4v-4h-5v4z" fill="#2aa6e0" />
        </svg>
      </Task>
      <Task label="Store">
        <svg width="22" height="24" viewBox="0 0 22 24">
          <path d="M0 7l19-2 2 17-19 2z" fill="#fff" />
          <path d="M5 8V4c0-4 9-4 9 0v3" fill="none" stroke="#fff" strokeWidth="1.5" />
          <path d="M5 10.500l4-.5v4.500H5zM10 9.900l5-.6v5.200h-5zM5 15.500h4V20l-4-.5zM10 15.500h5v5.200l-5-.6z" fill="#0a1719" />
        </svg>
      </Task>
      <Task label="Control panel" open>
        <svg width="22" height="17" viewBox="0 0 22 17">
          <path d="M0 0h22v17H0z" fill="#5ab8ee" />
          <path d="M1.500 1.500h19v14h-19z" fill="#a5dcf8" />
          <circle cx="7" cy="6.5" r="4" fill="#1a74c4" />
          <path d="M7 6.500v-4a4 4 0 0 1 4 4z" fill="#f5b53c" />
          <path d="M13 3h2v6h-2zM16.500 3H20v1.500h-3.500zM16.500 6H20v1.500h-3.500z" fill="#1a74c4" />
          <path d="M3 12h10v1.500H3z" fill="#f5b53c" />
        </svg>
      </Task>
      <Task label="CalMAN" open active>
        <svg width="22" height="24" viewBox="0 0 22 24">
          <path d="M3 0l17 18L4 24z" fill="#063c08" stroke="#17a81c" />
          <path d="M13 10H8.500l-.5 4c2.500-1 5 0 4.500 2.500-.3 2-3.500 2.500-5 1" fill="none" stroke="#5cf55c" strokeWidth="1.8" />
        </svg>
      </Task>
      <Task label="Paint" open>
        <svg width="25" height="25" viewBox="0 0 25 25">
          <path d="M12 4C4 4 0 11 1 16c1 4 4 4 5 2s3-2 4 1c1 4 5 5 8 2 4-4 4-17-6-17z" fill="#dcebf5" />
          <circle cx="6" cy="11" r="2" fill="#e0453c" />
          <circle cx="10" cy="7.5" r="2" fill="#56a845" />
          <circle cx="15" cy="8.5" r="2" fill="#f2b52c" />
          <circle cx="5.5" cy="15.5" r="1.6" fill="#3a82d0" />
          <path d="M20 3l3 1-8 20-1.500-.5z" fill="#d9822b" />
          <path d="M19 5c0-3 2-5 4-5 1 2 1 4-.5 6.500z" fill="#b98d5a" />
        </svg>
      </Task>
      <div className="ml-auto flex items-center">
        <button aria-label="Get help" className="flex size-8 items-center justify-center rounded-full border-[3px] border-white bg-[#0a96dc] text-[24px] leading-none font-bold">?</button>
        <svg className="ml-1.5" width="13" height="8" fill="none" stroke="#fff" strokeWidth="1.5"><path d="M1 7l5.500-5.500L12 7" /></svg>
        <svg className="ml-[9px]" width="17" height="13" viewBox="0 0 17 13" fill="none" stroke="#fff">
          <path d="M5.500 3.500h9v8h-9zM15 6h1.500v3H15M1 1v2M4 1v2M.5 3.500h4v2c0 2-4 2-4 0zM2.500 7v4h3" />
          <path d="M7 5h6v5H7z" fill="#fff" />
        </svg>
        <svg className="ml-2.5" width="14" height="14" viewBox="0 0 14 14" fill="none" stroke="#fff" strokeWidth="1.3">
          <path d="M1 13A12 12 0 0 1 13 1M4 13a9 9 0 0 1 9-9M7 13a6 6 0 0 1 6-6M10 13a3 3 0 0 1 3-3" />
        </svg>
        <svg className="ml-2" width="17" height="14" viewBox="0 0 17 14" fill="none" stroke="#fff">
          <path d="M.5 4.500h2.500l3.500-3v11l-3.500-3H.5zM8.500 5q1 2 0 4M10.500 3.500q2 3.500 0 7" />
          <path d="M12.500 2q3 5 0 10M14.500 1q3.500 6 0 12" stroke="#6a8082" />
        </svg>
        <svg className="ml-2" width="16" height="16" viewBox="0 0 16 16">
          <path d="M0 0h16v12h-5l-3 3.500L5 12H0z" fill="#fff" />
          <path d="M3 3.500h10M3 6h10M3 8.500h7" stroke="#002326" />
        </svg>
        <time className="ml-[13px] text-center text-[11px] leading-[17px]">
          16:43<br />19.05.2016
        </time>
        <div className="ml-[10px] h-10 w-1 border-l border-[#52686a]" />
      </div>
    </footer>
  );
}

export default function App() {
  return (
    <div className="flex min-h-screen flex-col overflow-hidden bg-[#232323] font-[Lato,sans-serif]">
      <TitleBar />
      <div className="flex flex-1">
        <Sidebar />
        <div className="flex min-w-0 flex-1 flex-col pl-px">
          <TabStrip />
          <main className="flex-1 bg-[#323232]">
            <div className="flex h-[640px]">
              <section className="w-[390px] shrink-0 text-[#f5f5f5]">
                <h2 className="mt-[22px] pl-[25px] text-[40px] leading-[52px]">ColorChecker</h2>
                <div className="mt-[17px] pl-8 text-center text-[31px] leading-[44px]">
                  <p>Avg dE2000: 4,82</p>
                  <p>Max dE2000: 10,73</p>
                </div>
                <DeltaEChart />
              </section>
              <section className="w-[628px] shrink-0">
                <div className="mt-[22px] flex h-[401px] pl-1">
                  <DeltaChart title="DeltaL" value={1.97} width={196} />
                  <DeltaChart title="DeltaC" value={-3.83} width={196} />
                  <DeltaChart title="DeltaH" value={-2.53} width={211} />
                </div>
                <SwatchStrip />
              </section>
              <div className="flex min-w-0 flex-1 pt-[23px] pr-px">
                <CieChart />
              </div>
            </div>
            <div className="flex pr-0.5">
              <Reading />
              <DataTable />
            </div>
            <PatchBar />
          </main>
        </div>
      </div>
      <Taskbar />
    </div>
  );
}
